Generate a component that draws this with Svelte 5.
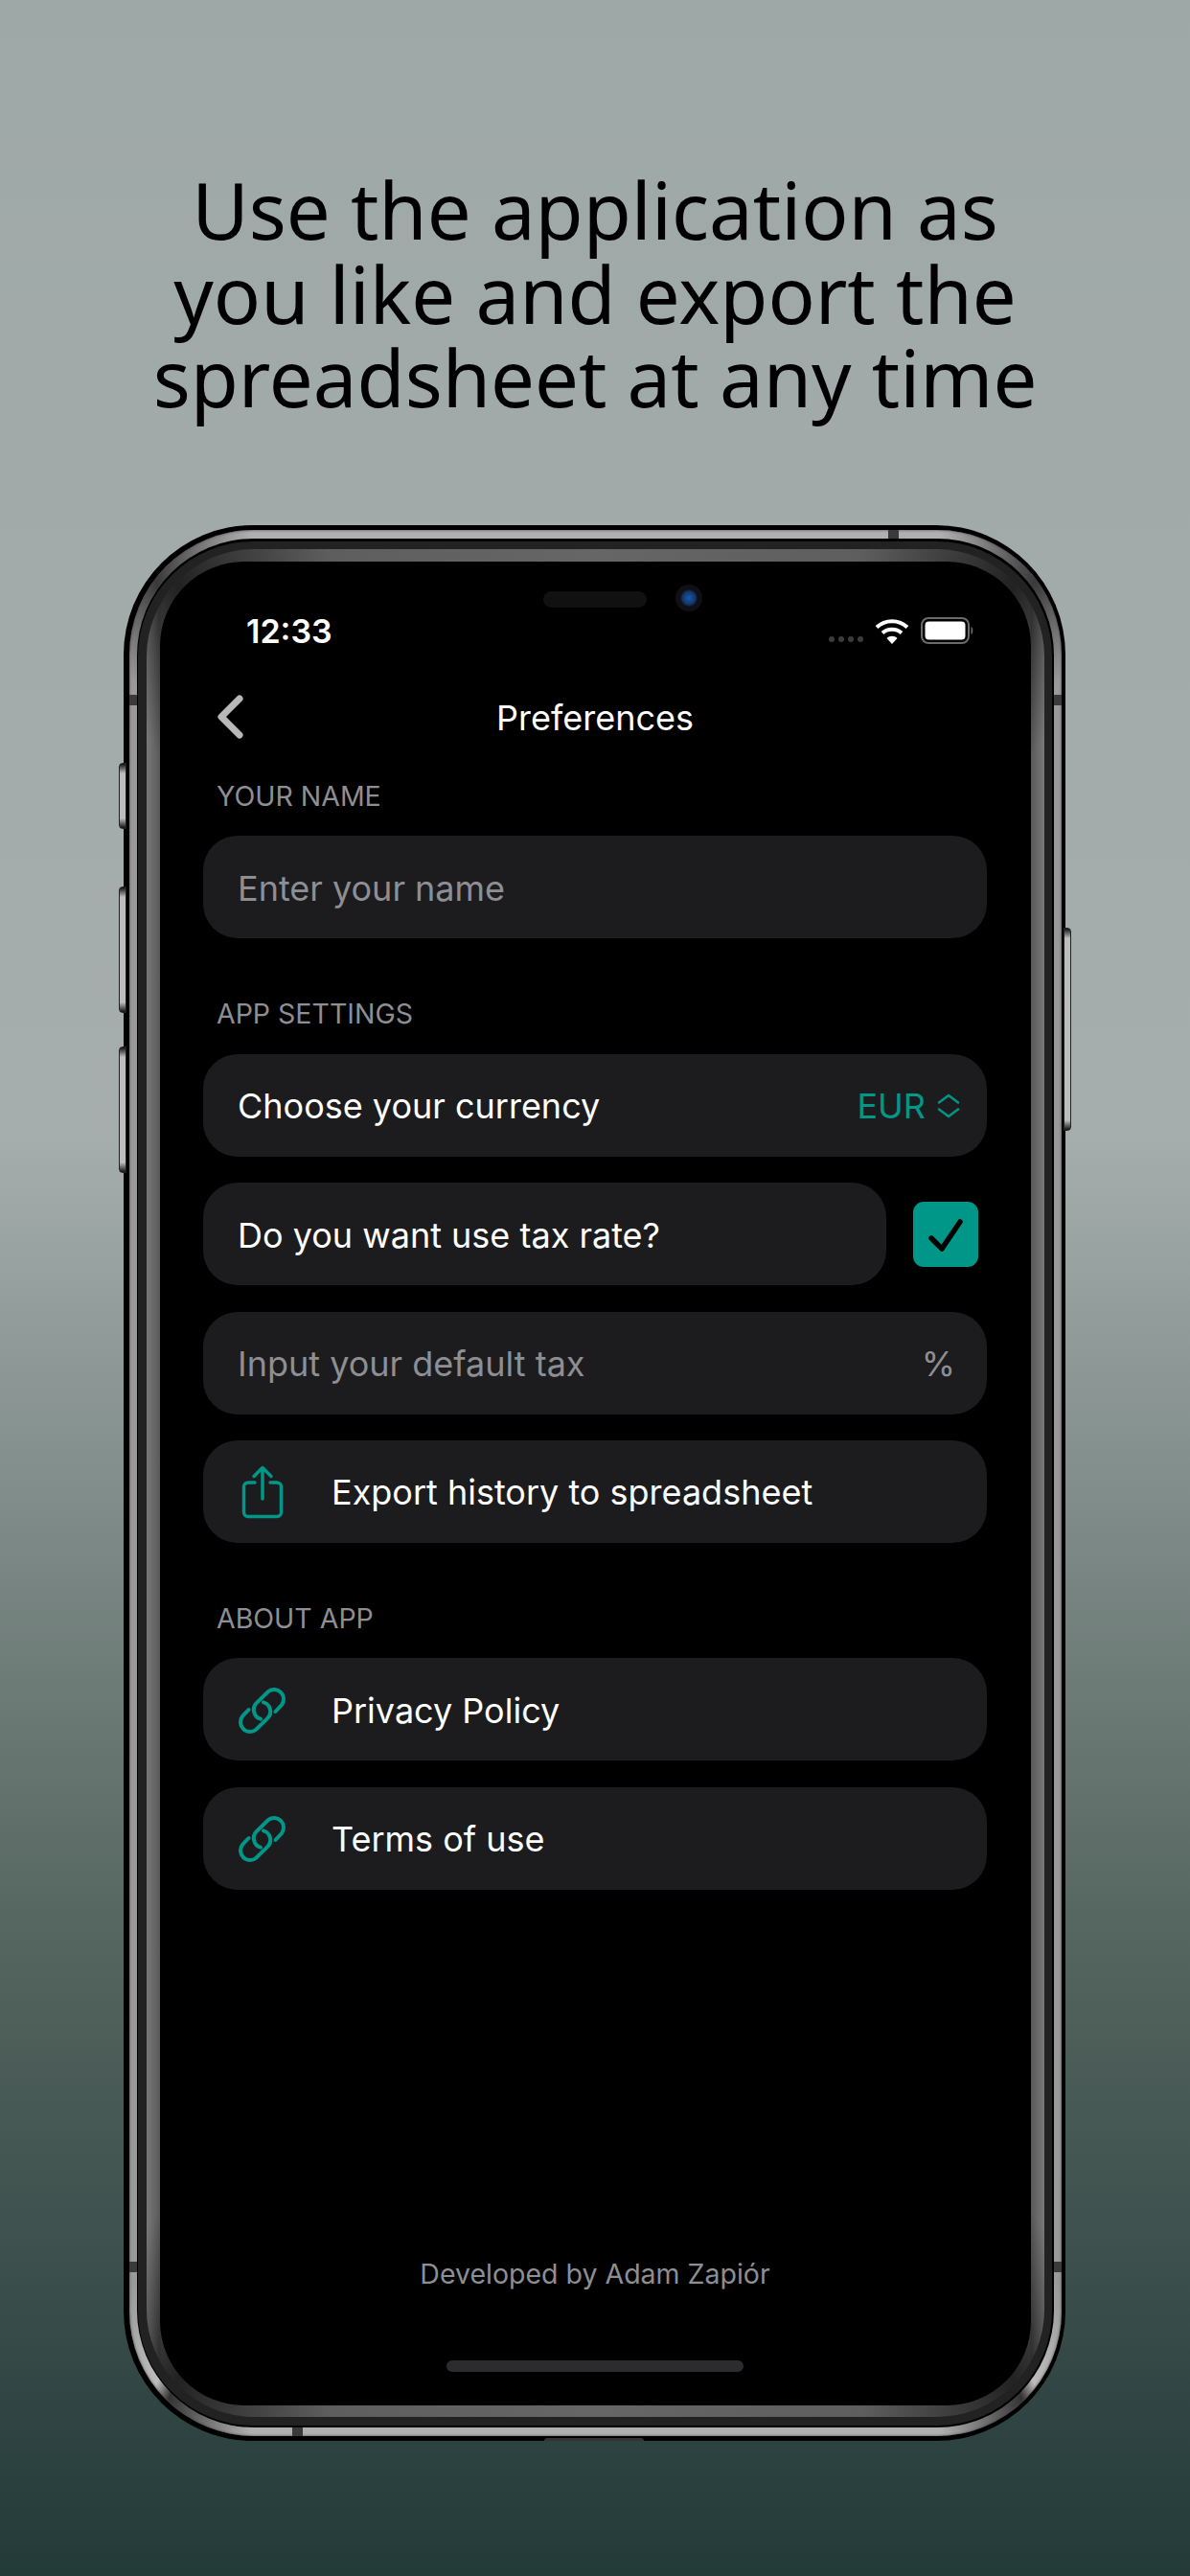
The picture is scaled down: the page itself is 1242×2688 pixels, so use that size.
<script>
  const aboutLinks = ['Privacy Policy', 'Terms of use'];
</script>

<div class="page">
  <h1>Use the application as<br />you like and export the<br />spreadsheet at any time</h1>

  <div class="shell">
    <span class="btn mute"></span>
    <span class="btn vol-up"></span>
    <span class="btn vol-down"></span>
    <span class="btn power"></span>
    <span class="port"></span>

    <div class="metal">
      <span class="tick tick-top"></span>
      <span class="tick tick-bottom"></span>
      <span class="tick tick-left-a"></span>
      <span class="tick tick-left-b"></span>
      <span class="tick tick-right-a"></span>
      <span class="tick tick-right-b"></span>
      <div class="gap">
        <div class="bezel">
          <div class="band">
            <div class="screen">
              <span class="speaker"></span>
              <span class="camera"></span>

              <div class="status">
                <span class="time">12:33</span>
                <div class="status-icons">
                  <span class="dots"><i></i><i></i><i></i><i></i></span>
                  <svg class="wifi" width="36" height="27" viewBox="0 0 36 27" fill="none" stroke="#fff" stroke-width="4">
                    <path d="M2 9.5C11 1 25 1 34 9.5" />
                    <path d="M8 15.5C13.5 10.5 22.500 10.500 28 15.500" />
                    <path d="M18 27L12.500 21C15.500 18 20.500 18 23.500 21Z" fill="#fff" stroke="none" />
                  </svg>
                  <svg class="battery" width="56" height="28" viewBox="0 0 56 28">
                    <rect x="1" y="1" width="49" height="26" rx="7" fill="none" stroke="#6a6a6a" stroke-width="2" />
                    <rect x="4.500" y="4.500" width="42" height="19" rx="4" fill="#fff" />
                    <path d="M52.500 10C55 11 55 17 52.500 18Z" fill="#6a6a6a" />
                  </svg>
                </div>
              </div>

              <div class="nav">
                <svg class="back" width="28" height="46" viewBox="0 0 28 46" fill="none" stroke="#b8b8b8" stroke-width="7" stroke-linecap="round" stroke-linejoin="round">
                  <path d="M24 4L5 23L24 42" />
                </svg>
                <span class="nav-title">Preferences</span>
              </div>

              <div class="form">
                <section>
                  <h2>YOUR NAME</h2>
                  <div class="card"><span class="muted">Enter your name</span></div>
                </section>

                <section>
                  <h2>APP SETTINGS</h2>
                  <div class="card between">
                    <span>Choose your currency</span>
                    <span class="currency">
                      EUR
                      <svg width="24" height="26" viewBox="0 0 24 26" fill="none" stroke="#009688" stroke-width="2.500" stroke-linecap="round" stroke-linejoin="round">
                        <path d="M2 9.500L12 2L22 9.500" />
                        <path d="M2 16.500L12 24L22 16.500" />
                      </svg>
                    </span>
                  </div>
                  <div class="tax-row">
                    <div class="card grow"><span>Do you want use tax rate?</span></div>
                    <span class="checkbox">
                      <svg width="68" height="68" viewBox="0 0 68 68" fill="none" stroke="#000" stroke-width="5.500" stroke-linecap="round" stroke-linejoin="round">
                        <path d="M19 38L30 49L49 21" />
                      </svg>
                    </span>
                  </div>
                  <div class="card between">
                    <span class="muted">Input your default tax</span>
                    <span class="muted percent">%</span>
                  </div>
                  <div class="card">
                    <span class="icon">
                      <svg width="44" height="56" viewBox="0 0 44 56" fill="none" stroke="#009688" stroke-width="3.500" stroke-linecap="round" stroke-linejoin="round">
                        <path d="M14 18H7a4.500 4.500 0 0 0-4.500 4.500V49A4.500 4.500 0 0 0 7 53.500H37a4.500 4.500 0 0 0 4.500-4.500V22.500A4.500 4.500 0 0 0 37 18H30" />
                        <path d="M22 35V2.500M13 11.500L22 2.500L31 11.500" />
                      </svg>
                    </span>
                    <span>Export history to spreadsheet</span>
                  </div>
                </section>

                <section>
                  <h2>ABOUT APP</h2>
                  {#each aboutLinks as link}
                    <div class="card">
                      <span class="icon">
                        <svg width="70" height="70" viewBox="0 0 70 70" fill="none" stroke="#009688" stroke-width="4" stroke-linecap="round">
                          <path d="M48.500 36L55 29A10 10 0 0 0 41 15L28.900 26.900A10 10 0 0 0 33 43.700" />
                          <path d="M48.500 36L55 29A10 10 0 0 0 41 15L28.900 26.900A10 10 0 0 0 33 43.700" transform="rotate(180 34.500 35)" />
                        </svg>
                      </span>
                      <span>{link}</span>
                    </div>
                  {/each}
                </section>
              </div>

              <p class="credit">Developed by Adam Zapiór</p>
              <span class="home"></span>
            </div>
          </div>
        </div>
      </div>
    </div>
  </div>
</div>

<style>
  :global(body) {
    margin: 0;
  }

  .page {
    width: 1242px;
    height: 2688px;
    overflow: hidden;
    display: flex;
    flex-direction: column;
    background: linear-gradient(180deg, #9ea8a6 0%, #a5aeac 44%, #7b8885 60%, #55655f 75%, #3c4f4c 88%, #223a38 100%);
  }

  h1 {
    margin: 0;
    padding-top: 175px;
    height: 264px;
    font-family: "Noto Sans", sans-serif;
    font-weight: 400;
    font-size: 81.500px;
    line-height: 87.500px;
    text-align: center;
    color: #000;
  }

  .shell {
    position: relative;
    flex: none;
    margin: 109px 0 0 129px;
    width: 983px;
    box-sizing: border-box;
    padding: 5px 4px 5px 6px;
    background: #000;
    border-radius: 135px;
  }

  .btn {
    position: absolute;
    width: 8px;
    background: linear-gradient(180deg, #111 0, #bdbdbd 10px, #bdbdbd calc(100% - 10px), #111 100%);
    border: 1px solid #222;
    box-sizing: border-box;
  }

  .mute,
  .vol-up,
  .vol-down {
    left: -5px;
    border-radius: 4px 0 0 4px;
  }

  .mute { top: 248px; height: 69px; }
  .vol-up { top: 377px; height: 132px; }
  .vol-down { top: 544px; height: 132px; }

  .power {
    right: -6px;
    top: 420px;
    height: 212px;
    border-radius: 0 4px 4px 0;
  }

  .port {
    position: absolute;
    left: 439px;
    bottom: 0;
    width: 104px;
    height: 3px;
    background: #333;
    border-radius: 3px 3px 0 0;
  }

  .metal {
    position: relative;
    padding: 9px 8px;
    border-radius: 130px;
    background: conic-gradient(#b0b0b0 0deg, #b0b0b0 20deg, #3a3a3a 26deg, #9a9a9a 30deg, #9a9a9a 150deg, #bdbdbd 154deg, #333 155deg, #b0b0b0 160deg, #b0b0b0 200deg, #333 205deg, #bdbdbd 206deg, #9a9a9a 210deg, #9a9a9a 330deg, #3a3a3a 334deg, #b0b0b0 340deg);
    box-shadow: inset 0 0 3px #444;
  }

  .tick {
    position: absolute;
    background: #3a3a3a;
  }

  .tick-top { top: 0; left: 792px; width: 11px; height: 9px; }
  .tick-bottom { bottom: 0; left: 170px; width: 11px; height: 9px; }
  .tick-left-a { left: 0; top: 172px; width: 8px; height: 11px; }
  .tick-left-b { left: 0; top: 1807px; width: 8px; height: 11px; }
  .tick-right-a { right: 0; top: 172px; width: 8px; height: 11px; }
  .tick-right-b { right: 0; top: 1807px; width: 8px; height: 11px; }

  .gap {
    position: relative;
    padding: 3px 2px 2px 1px;
    background: #000;
    border-radius: 122px;
  }

  .bezel {
    padding: 8px 8px 9px 9px;
    background: #222;
    border-radius: 120px;
  }

  .band {
    padding: 13px 14px 12px 14px;
    border-radius: 112px;
    background:
      linear-gradient(90deg, rgba(255, 255, 255, 0.12) 0, rgba(0, 0, 0, 0.12) 14px, rgba(0, 0, 0, 0) 15px, rgba(0, 0, 0, 0) calc(100% - 15px), rgba(0, 0, 0, 0.12) calc(100% - 14px), rgba(255, 255, 255, 0.12) 100%),
      conic-gradient(#666 0deg, #5e5e5e 16deg, #222 25deg, #666 31deg, #666 149deg, #222 155deg, #5e5e5e 164deg, #666 180deg, #5e5e5e 196deg, #222 205deg, #666 211deg, #666 329deg, #222 335deg, #5e5e5e 344deg, #666 360deg);
  }

  .screen {
    position: relative;
    height: 1924px;
    display: flex;
    flex-direction: column;
    padding: 55px 46px 35px 45px;
    box-sizing: border-box;
    background: #000;
    border-radius: 88px;
    color: #fff;
    font-family: Inter, "Liberation Sans", sans-serif;
  }

  .speaker {
    position: absolute;
    left: 400px;
    top: 31px;
    width: 108px;
    height: 17px;
    border-radius: 9px;
    background: #111;
  }

  .camera {
    position: absolute;
    left: 538px;
    top: 24px;
    width: 28px;
    height: 28px;
    border-radius: 50%;
    background: radial-gradient(circle, #1c5aa8 0, #0f3566 7px, #101014 9px);
  }

  .status {
    display: flex;
    align-items: center;
    justify-content: space-between;
    height: 34px;
    padding: 0 13px 0 45px;
  }

  .time {
    font-size: 34px;
    font-weight: 600;
  }

  .status-icons {
    display: flex;
    align-items: center;
    gap: 12px;
  }

  .dots {
    display: flex;
    gap: 4px;
    align-self: flex-end;
    margin-bottom: 2px;
  }

  .dots i {
    width: 6px;
    height: 6px;
    border-radius: 50%;
    background: #3c3c3c;
  }

  .nav {
    position: relative;
    display: flex;
    align-items: center;
    justify-content: center;
    height: 60px;
    margin-top: 43px;
  }

  .back {
    position: absolute;
    left: 14px;
    top: 7px;
  }

  .nav-title {
    padding-top: 2px;
    font-size: 36px;
  }

  .form {
    display: flex;
    flex-direction: column;
    gap: 59px;
    margin-top: 33px;
  }

  section {
    display: flex;
    flex-direction: column;
    gap: 27.400px;
  }

  h2 {
    margin: 0 0 -2px 14px;
    height: 36px;
    line-height: 39px;
    font-size: 28.500px;
    font-weight: 400;
    color: #8e8e93;
  }

  .card {
    display: flex;
    align-items: center;
    height: 107px;
    box-sizing: border-box;
    padding: 2px 28px 0 36px;
    border-radius: 36px;
    background: #1c1c1e;
    font-size: 36px;
  }

  .between {
    justify-content: space-between;
  }

  .grow {
    flex: 1;
  }

  .muted {
    color: #8e8e93;
  }

  .percent {
    margin-right: 5px;
  }

  .currency {
    display: flex;
    align-items: center;
    gap: 12px;
    color: #009688;
  }

  .tax-row {
    display: flex;
    align-items: center;
    gap: 28px;
    padding-right: 9px;
  }

  .checkbox {
    display: block;
    width: 68px;
    height: 68px;
    border-radius: 11px;
    background: #009688;
  }

  .checkbox svg {
    display: block;
  }

  .icon {
    display: flex;
    align-items: center;
    justify-content: center;
    width: 52px;
    height: 70px;
    margin-right: 46px;
  }

  .icon svg {
    flex: none;
  }

  .credit {
    margin: auto 0 0;
    line-height: 40px;
    font-size: 28.500px;
    text-align: center;
    color: #8e8e93;
  }

  .home {
    display: block;
    align-self: center;
    width: 310px;
    height: 12px;
    margin-top: 70px;
    border-radius: 6px;
    background: #2c2c2e;
  }
</style>
